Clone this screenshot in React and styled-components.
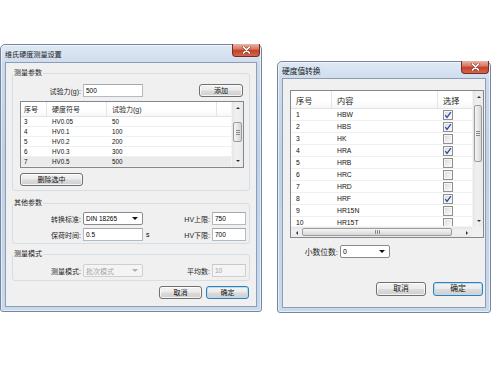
import React from 'react'
import styled, { createGlobalStyle } from 'styled-components'

const GlobalStyle = createGlobalStyle`
  html, body { margin: 0; padding: 0; background: #fff; }
  body { font-family: "Liberation Sans", "Noto Sans CJK SC", sans-serif; color: #000; }
`

const Desktop = styled.div`
  position: relative;
  width: 500px;
  height: 375px;
  overflow: hidden;
  background: #fff;
`

// windows sit on a free canvas, so they are placed by coordinates
const Window = styled.div`
  position: absolute;
  left: ${p => p.$left}px;
  top: ${p => p.$top}px;
  width: ${p => p.$width}px;
  height: ${p => p.$height}px;
  box-sizing: border-box;
  display: flex;
  flex-direction: column;
  padding: 0 4px 4px 4px;
  border: 1px solid #7587a0;
  border-radius: 5px 5px 3px 3px;
  background: linear-gradient(180deg, #dfe9f5 0%, #cbdaec 8%, #bfd1e7 40%, #c9d9ec 100%);
  box-shadow: inset 0 0 0 1px rgba(255, 255, 255, 0.55);
`

const TitleBar = styled.div`
  height: ${p => p.$h}px;
  flex-shrink: 0;
  display: flex;
  justify-content: space-between;
  align-items: center;
`

const Title = styled.span`
  font-size: ${p => p.$size}px;
  color: #1b1b1b;
  letter-spacing: -0.1px;
`

const CloseButton = styled.div`
  align-self: flex-start;
  width: 28px;
  height: 13px;
  margin-top: -1px;
  margin-right: -3px;
  box-sizing: border-box;
  border: 1px solid #7a2b20;
  border-top: none;
  border-radius: 0 0 4px 4px;
  background: linear-gradient(180deg, #eab3a4 0%, #d97a64 40%, #c4422c 55%, #d4664c 100%);
  display: flex;
  align-items: center;
  justify-content: center;
`

const Client = styled.div`
  flex: 1;
  display: flex;
  flex-direction: column;
  background: #f0f0f0;
  border: 1px solid #8d9db4;
  font-size: ${p => p.$size}px;
`

const Group = styled.fieldset`
  margin: ${p => p.$mt}px 6px 0 6px;
  padding: 0 0 ${p => p.$pb}px 0;
  border: 1px solid #d5dde6;
  border-radius: 3px;
  min-width: 0;
`

const Legend = styled.legend`
  padding: 0 1px;
  margin-left: 0;
  line-height: 10px;
  color: #1e1e1e;
`

const FieldRow = styled.div`
  display: grid;
  grid-template-columns: 68px 60px 1fr auto 34px;
  column-gap: 2px;
  align-items: center;
  height: 13px;
  margin-top: ${p => p.$mt}px;
  padding-right: 3px;
`

const Label = styled.span`
  text-align: right;
  white-space: nowrap;
  color: #1e1e1e;
`

const Unit = styled.span`
  padding-left: 1px;
`

const TextBox = styled.div`
  box-sizing: border-box;
  height: 13px;
  width: ${p => (p.$w ? `${p.$w}px` : 'auto')};
  display: flex;
  align-items: center;
  padding-left: 2px;
  background: ${p => (p.$disabled ? '#f4f4f4' : '#fff')};
  color: ${p => (p.$disabled ? '#a3a3a3' : '#000')};
  border: 1px solid ${p => (p.$disabled ? '#d0d0d0' : '#b5b9c0')};
  border-top-color: ${p => (p.$disabled ? '#c8c8c8' : '#a3a7ae')};
  font-size: 6.5px;
`

const Combo = styled.div`
  box-sizing: border-box;
  height: ${p => p.$h || 13}px;
  width: ${p => (p.$w ? `${p.$w}px` : 'auto')};
  display: flex;
  align-items: center;
  justify-content: space-between;
  padding: 0 4px 0 2px;
  border-radius: 2px;
  background: ${p => (p.$disabled ? '#f4f4f4' : '#fff')};
  color: ${p => (p.$disabled ? '#a8a8a8' : '#000')};
  border: 1px solid ${p => (p.$disabled ? '#cfcfcf' : '#8a8a8a')};
  font-size: ${p => p.$fs || 6.5}px;
`

const Arrow = styled.span`
  width: 0;
  height: 0;
  border-left: 3px solid transparent;
  border-right: 3px solid transparent;
  border-top: 3px solid ${p => (p.$disabled ? '#b0b0b0' : '#111')};
`

const Button = styled.button`
  box-sizing: border-box;
  width: ${p => p.$w}px;
  height: ${p => p.$h || 13}px;
  padding: 0;
  font: inherit;
  color: #111;
  border: 1px solid ${p => (p.$default ? '#3d7bad' : '#707070')};
  border-radius: 3px;
  background: linear-gradient(180deg, #f3f3f3 0%, #ebebeb 48%, #dcdcdc 52%, #cfcfcf 100%);
  box-shadow: inset 0 0 0 1px ${p => (p.$default ? '#aee0f8' : 'rgba(255,255,255,0.75)')};
  display: flex;
  align-items: center;
  justify-content: center;
  line-height: 1;
`

const InlineRow = styled.div`
  display: flex;
  align-items: center;
  margin-top: ${p => p.$mt}px;
  height: 13px;
`

const Spacer = styled.div`
  flex: 1;
`

const ButtonBar = styled.div`
  display: flex;
  justify-content: flex-end;
  gap: ${p => p.$gap}px;
  margin-top: ${p => p.$mt}px;
  padding-right: ${p => p.$pr}px;
`

/* ---- list views ---- */

const ListBox = styled.div`
  box-sizing: border-box;
  height: ${p => p.$h}px;
  margin: ${p => p.$margin};
  border: 1px solid #828790;
  background: #fff;
  display: grid;
  grid-template-columns: 1fr ${p => p.$sb}px;
  grid-template-rows: ${p => (p.$hscroll ? `1fr ${p.$sb}px` : '1fr')};
  overflow: hidden;
`

const ListMain = styled.div`
  overflow: hidden;
  display: flex;
  flex-direction: column;
`

const HeaderRow = styled.div`
  display: grid;
  grid-template-columns: ${p => p.$cols};
  height: ${p => p.$h}px;
  flex-shrink: 0;
  background: linear-gradient(180deg, #ffffff 0%, #ffffff 55%, #f6f7f8 100%);
  border-bottom: 1px solid #e2e4e7;
  box-sizing: border-box;
`

const HeaderCell = styled.div`
  display: flex;
  align-items: center;
  padding-left: ${p => p.$pl}px;
  border-right: 1px solid #e5e5e5;
  color: #1e1e1e;
  font-size: ${p => p.$fs}px;
  white-space: nowrap;
`

const Row = styled.div`
  display: grid;
  grid-template-columns: ${p => p.$cols};
  height: ${p => p.$h}px;
  flex-shrink: 0;
  box-sizing: border-box;
  border-bottom: 1px solid #f0f0f0;
  background: ${p => (p.$selected ? '#ebebeb' : '#fff')};
`

const Cell = styled.div`
  display: flex;
  align-items: center;
  padding-left: ${p => p.$pl}px;
  font-size: ${p => p.$fs}px;
  white-space: nowrap;
  overflow: hidden;
  color: #111;
`

const VScroll = styled.div`
  grid-column: 2;
  grid-row: 1;
  display: flex;
  flex-direction: column;
  background: linear-gradient(90deg, #e6e6e6 0%, #f0f0f0 40%, #eaeaea 100%);
  border-left: 1px solid #f4f4f4;
`

const HScroll = styled.div`
  grid-column: 1;
  grid-row: 2;
  display: flex;
  background: linear-gradient(180deg, #e6e6e6 0%, #f0f0f0 40%, #eaeaea 100%);
  border-top: 1px solid #f4f4f4;
`

const Corner = styled.div`
  grid-column: 2;
  grid-row: 2;
  background: #f0f0f0;
`

const ScrollArrow = styled.div`
  width: ${p => p.$size}px;
  height: ${p => p.$size}px;
  flex-shrink: 0;
  display: flex;
  align-items: center;
  justify-content: center;
  &::after {
    content: '';
    width: 0;
    height: 0;
    border: 2px solid transparent;
    ${p => `border-${p.$dir}-width: 0;`}
    ${p => {
      const opposite = { top: 'bottom', bottom: 'top', left: 'right', right: 'left' }[p.$dir]
      return `border-${opposite}: 2px solid #333;`
    }}
  }
`

const ScrollTrack = styled.div`
  flex: 1;
  position: relative;
  display: flex;
  flex-direction: ${p => (p.$horizontal ? 'row' : 'column')};
`

const ThumbGap = styled.div`
  flex: 0 0 ${p => p.$size}px;
`

const Thumb = styled.div`
  flex: 0 0 ${p => p.$size}px;
  box-sizing: border-box;
  margin: ${p => (p.$horizontal ? '1px 0' : '0 1px')};
  border: 1px solid #9b9b9b;
  border-radius: 2px;
  background: ${p =>
    p.$horizontal
      ? 'linear-gradient(180deg, #f6f6f6 0%, #e6e6e6 50%, #d6d6d6 100%)'
      : 'linear-gradient(90deg, #f6f6f6 0%, #e6e6e6 50%, #d6d6d6 100%)'};
  display: flex;
  align-items: center;
  justify-content: center;
`

const Grip = styled.div`
  display: flex;
  flex-direction: ${p => (p.$horizontal ? 'row' : 'column')};
  gap: 1px;
  & > span {
    display: block;
    background: #8a8a8a;
    ${p => (p.$horizontal ? 'width: 1px; height: 4px;' : 'width: 4px; height: 1px;')}
  }
`

const CheckBoxBox = styled.div`
  width: 10px;
  height: 10px;
  box-sizing: border-box;
  border: 1px solid #8f8f8f;
  background: linear-gradient(135deg, #d9d9d9 0%, #eeeeee 60%, #fbfbfb 100%);
  box-shadow: inset 0 0 0 1px #f6f6f6;
  display: flex;
  align-items: center;
  justify-content: center;
`

function CheckBox({ checked }) {
  return (
    <CheckBoxBox>
      {checked && (
        <svg width="8" height="8" viewBox="0 0 8 8">
          <path d="M1.2 4.2 L3 6.4 L6.9 1.2" fill="none" stroke="#2f4fa8" strokeWidth="1.3" />
        </svg>
      )}
    </CheckBoxBox>
  )
}

function CloseX() {
  return (
    <CloseButton>
      <svg width="9" height="8" viewBox="0 0 9 8">
        <path d="M1.5 1 L7.5 7 M7.5 1 L1.5 7" stroke="#5a1c14" strokeWidth="3" strokeLinecap="round" opacity="0.55" />
        <path d="M1.5 1 L7.5 7 M7.5 1 L1.5 7" stroke="#fff" strokeWidth="1.7" strokeLinecap="round" />
      </svg>
    </CloseButton>
  )
}

function VScrollBar({ size, before, thumb }) {
  return (
    <VScroll>
      <ScrollArrow $size={size} $dir="top" />
      <ScrollTrack>
        <ThumbGap $size={before} />
        <Thumb $size={thumb}>
          <Grip><span /><span /><span /></Grip>
        </Thumb>
      </ScrollTrack>
      <ScrollArrow $size={size} $dir="bottom" />
    </VScroll>
  )
}

function HScrollBar({ size, before, thumb }) {
  return (
    <HScroll>
      <ScrollArrow $size={size} $dir="left" />
      <ScrollTrack $horizontal>
        <ThumbGap $size={before} />
        <Thumb $size={thumb} $horizontal>
          <Grip $horizontal><span /><span /><span /></Grip>
        </Thumb>
      </ScrollTrack>
      <ScrollArrow $size={size} $dir="right" />
    </HScroll>
  )
}

/* ---- data ---- */

const forceRows = [
  { no: 3, sym: 'HV0.05', force: 50 },
  { no: 4, sym: 'HV0.1', force: 100 },
  { no: 5, sym: 'HV0.2', force: 200 },
  { no: 6, sym: 'HV0.3', force: 300 },
  { no: 7, sym: 'HV0.5', force: 500, selected: true },
]

const scaleRows = [
  { no: 1, name: 'HBW', on: true },
  { no: 2, name: 'HBS', on: true },
  { no: 3, name: 'HK', on: false },
  { no: 4, name: 'HRA', on: true },
  { no: 5, name: 'HRB', on: false },
  { no: 6, name: 'HRC', on: false },
  { no: 7, name: 'HRD', on: false },
  { no: 8, name: 'HRF', on: true },
  { no: 9, name: 'HR15N', on: false },
  { no: 10, name: 'HR15T', on: false },
]

const leftCols = '26px 60px 110px 1fr'
const rightCols = '41px 106px 1fr'

function VickersDialog() {
  return (
    <Window $left={0} $top={44} $width={262} $height={268}>
      <TitleBar $h={17}>
        <Title $size={7.2}>维氏硬度测量设置</Title>
        <CloseX />
      </TitleBar>
      <Client $size={7}>
        <Group $mt={5} $pb={4}>
          <Legend>测量参数</Legend>
          <InlineRow $mt={6}>
            <Label style={{ width: 68 }}>试验力(g):</Label>
            <TextBox $w={60} style={{ marginLeft: 2 }}>500</TextBox>
            <Spacer />
            <Button $w={44} style={{ marginRight: 6 }}>添加</Button>
          </InlineRow>
          <ListBox $h={67} $sb={12} $margin="4px 5px 0 7px">
            <ListMain>
              <HeaderRow $cols={leftCols} $h={15}>
                <HeaderCell $pl={3} $fs={7}>序号</HeaderCell>
                <HeaderCell $pl={5} $fs={7}>硬度符号</HeaderCell>
                <HeaderCell $pl={5} $fs={7}>试验力(g)</HeaderCell>
                <HeaderCell $pl={0} $fs={7} style={{ borderRight: 'none' }} />
              </HeaderRow>
              {forceRows.map(r => (
                <Row key={r.no} $cols={leftCols} $h={10} $selected={r.selected}>
                  <Cell $pl={3} $fs={6.3}>{r.no}</Cell>
                  <Cell $pl={5} $fs={6.3}>{r.sym}</Cell>
                  <Cell $pl={5} $fs={6.3}>{r.force}</Cell>
                  <Cell $pl={0} $fs={6.3} />
                </Row>
              ))}
            </ListMain>
            <VScrollBar size={12} before={8} thumb={20} />
          </ListBox>
          <InlineRow $mt={5}>
            <Button $w={63} style={{ marginLeft: 7 }}>删除选中</Button>
          </InlineRow>
        </Group>

        <Group $mt={7} $pb={2}>
          <Legend>其他参数</Legend>
          <FieldRow $mt={4}>
            <Label>转换标准:</Label>
            <Combo $w={60}>DIN 18265<Arrow /></Combo>
            <span />
            <Label>HV上限:</Label>
            <TextBox>750</TextBox>
          </FieldRow>
          <FieldRow $mt={3}>
            <Label>保荷时间:</Label>
            <TextBox>0.5</TextBox>
            <Unit>s</Unit>
            <Label>HV下限:</Label>
            <TextBox>700</TextBox>
          </FieldRow>
        </Group>

        <Group $mt={5} $pb={3}>
          <Legend>测量模式</Legend>
          <FieldRow $mt={5}>
            <Label>测量模式:</Label>
            <Combo $w={60} $disabled $fs={7}>批次模式<Arrow $disabled /></Combo>
            <span />
            <Label>平均数:</Label>
            <TextBox $disabled>10</TextBox>
          </FieldRow>
        </Group>

        <ButtonBar $gap={4} $mt={5} $pr={7}>
          <Button $w={43}>取消</Button>
          <Button $w={43} $default>确定</Button>
        </ButtonBar>
      </Client>
    </Window>
  )
}

function ConvertDialog() {
  return (
    <Window $left={277} $top={61} $width={214} $height={252}>
      <TitleBar $h={16}>
        <Title $size={7.8}>硬度值转换</Title>
        <CloseX />
      </TitleBar>
      <Client $size={7.8}>
        <ListBox $h={148} $sb={11} $hscroll $margin="11px 1px 0 7px">
          <ListMain>
            <HeaderRow $cols={rightCols} $h={18}>
              <HeaderCell $pl={5} $fs={8.2}>序号</HeaderCell>
              <HeaderCell $pl={5} $fs={8.2}>内容</HeaderCell>
              <HeaderCell $pl={5} $fs={8.2} style={{ borderRight: 'none' }}>选择</HeaderCell>
            </HeaderRow>
            {scaleRows.map(r => (
              <Row key={r.no} $cols={rightCols} $h={12}>
                <Cell $pl={5} $fs={6.8}>{r.no}</Cell>
                <Cell $pl={5} $fs={6.8}>{r.name}</Cell>
                <Cell $pl={5} $fs={6.8}><CheckBox checked={r.on} /></Cell>
              </Row>
            ))}
          </ListMain>
          <VScrollBar size={11} before={3} thumb={57} />
          <HScrollBar size={11} before={0} thumb={150} />
          <Corner />
        </ListBox>

        <InlineRow $mt={7}>
          <Label style={{ width: 40, marginLeft: 15 }}>小数位数:</Label>
          <Combo $w={50} $fs={7} style={{ marginLeft: 2 }}>0<Arrow /></Combo>
        </InlineRow>

        <ButtonBar $gap={7} $mt={24} $pr={2}>
          <Button $w={50} $h={14}>取消</Button>
          <Button $w={50} $h={14} $default>确定</Button>
        </ButtonBar>
      </Client>
    </Window>
  )
}

export default function App() {
  return (
    <>
      <GlobalStyle />
      <Desktop>
        <VickersDialog />
        <ConvertDialog />
      </Desktop>
    </>
  )
}
